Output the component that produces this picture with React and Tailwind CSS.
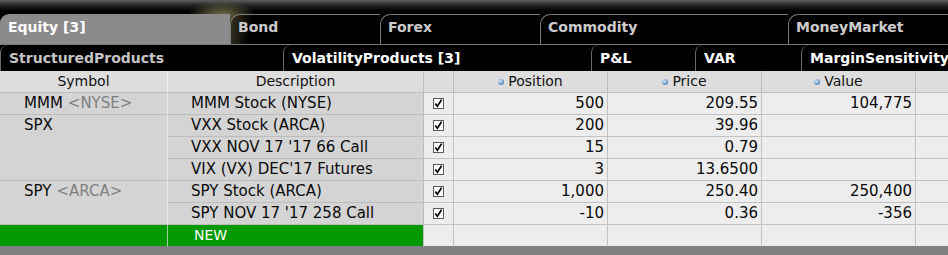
import { Fragment } from 'react';

const topTabs = [
  { label: 'Bond', w: 'w-[150px]' },
  { label: 'Forex', w: 'w-[160px]' },
  { label: 'Commodity', w: 'w-[248px]' },
  { label: 'MoneyMarket', w: 'flex-1' },
];

const subTabs = [
  { label: 'StructuredProducts', w: 'w-[283px]', dim: true },
  { label: 'VolatilityProducts [3]', w: 'w-[308px]' },
  { label: 'P&L', w: 'w-[104px]' },
  { label: 'VAR', w: 'w-[106px]' },
  { label: 'MarginSensitivity', w: 'flex-1' },
];

const groups = [
  {
    sym: 'MMM', ex: '<NYSE>', span: 'row-span-1',
    rows: [{ desc: 'MMM Stock (NYSE)', pos: '500', price: '209.55', value: '104,775' }],
  },
  {
    sym: 'SPX', span: 'row-span-3',
    rows: [
      { desc: 'VXX Stock (ARCA)', pos: '200', price: '39.96', value: '' },
      { desc: "VXX NOV 17 '17 66 Call", pos: '15', price: '0.79', value: '' },
      { desc: "VIX (VX) DEC'17 Futures", pos: '3', price: '13.6500', value: '' },
    ],
  },
  {
    sym: 'SPY', ex: '<ARCA>', span: 'row-span-2',
    rows: [
      { desc: 'SPY Stock (ARCA)', pos: '1,000', price: '250.40', value: '250,400' },
      { desc: "SPY NOV 17 '17 258 Call", pos: '-10', price: '0.36', value: '-356' },
    ],
  },
];

function Check() {
  return (
    <svg width="11" height="11" viewBox="0 0 11 11">
      <rect x="0.5" y="0.5" width="10" height="10" fill="#fff" stroke="#5a5a5a" />
      <path d="M2.3 5.6 L4.4 8.3 L8.6 1.6" stroke="#000" strokeWidth="1.7" fill="none" />
    </svg>
  );
}

function Dot() {
  return <span className="w-[6px] h-[6px] rounded-full bg-[radial-gradient(circle_at_35%_35%,#dcebf9,#4a7fbf_75%)]" />;
}

function TabBar() {
  return (
    <div>
      <div className="h-[44px] pt-[14px] flex bg-[radial-gradient(ellipse_34px_14px_at_222px_15px,#77724c,transparent),linear-gradient(to_bottom,#5e5e5e_0px,#262626_5px,#000_11px)]">
        <div className="w-[230px] h-[30px] bg-[#8b8b8b] rounded-tl-[9px] pl-[8px] pt-[4px] text-[14px] font-bold leading-[18px] text-white">
          Equity [3]
        </div>
        {topTabs.map((t) => (
          <div
            key={t.label}
            className={`${t.w} h-[30px] border-l border-t border-[#7c7c7c] rounded-tl-[10px] pl-[7px] pt-[3px] text-[14px] font-bold leading-[18px] text-[#cccccc] ${t.label === 'Bond' ? 'bg-[linear-gradient(100deg,#3a3522_0px,#000_22px)]' : 'bg-black'}`}
          >
            {t.label}
          </div>
        ))}
      </div>
      <div className="h-[27px] flex bg-black border-t border-[#777]">
        {subTabs.map((t) => (
          <div
            key={t.label}
            className={`${t.w} h-[26px] border-l border-[#6a6a6a] rounded-tl-[8px] pl-[8px] pt-[4px] text-[14px] font-bold leading-[18px] whitespace-nowrap overflow-hidden ${t.dim ? 'text-[#c4c4c4]' : 'text-white'}`}
          >
            {t.label}
          </div>
        ))}
      </div>
    </div>
  );
}

function Table() {
  const head = 'bg-[#dddddd] border-b border-r border-[#bdbdbd] flex items-center text-[14px] text-[#111]';
  const num = 'bg-[#ededed] border-b border-r border-[#c2c2c2] flex items-center justify-end pr-[3px] text-[15px] text-[#0a0a0a]';
  return (
    <div className="grid grid-cols-[168px_256px_30px_154px_154px_154px_1fr] auto-rows-[22px]">
      <div className={`${head} justify-center border-r-[#ececec]`}>Symbol</div>
      <div className={`${head} justify-center`}>Description</div>
      <div className={head} />
      <div className={`${head} justify-center gap-[4px]`}><Dot />Position</div>
      <div className={`${head} justify-center gap-[4px]`}><Dot />Price</div>
      <div className={`${head} justify-center gap-[4px]`}><Dot />Value</div>
      <div className={`${head} border-r-0`} />

      {groups.map((g) => (
        <Fragment key={g.sym}>
          <div className={`${g.span} col-start-1 bg-[#d4d4d4] border-b border-r border-b-[#bdbdbd] border-r-[#e8e8e8]`}>
            <div className="h-[21px] flex items-center pl-[24px] text-[15px] text-[#0a0a0a] whitespace-nowrap">
              {g.sym}
              {g.ex && <span className="ml-[5px] text-[#808080]">{g.ex}</span>}
            </div>
          </div>
          {g.rows.map((r) => (
            <Fragment key={r.desc}>
              <div className="col-start-2 bg-[#d4d4d4] border-b border-r border-[#bdbdbd] flex items-center pl-[23px] text-[15px] text-[#0a0a0a] whitespace-nowrap">
                {r.desc}
              </div>
              <div className="bg-[#ededed] border-b border-r border-[#c2c2c2] flex items-center pl-[9px]">
                <Check />
              </div>
              <div className={num}>{r.pos}</div>
              <div className={num}>{r.price}</div>
              <div className={num}>{r.value}</div>
              <div className="bg-[#ededed] border-b border-[#c2c2c2]" />
            </Fragment>
          ))}
        </Fragment>
      ))}

      <div className="bg-[#009a00] border-b border-r border-b-[#808080] border-r-[#9fcf9f]" />
      <div className="bg-[#009a00] border-b border-r border-b-[#808080] border-r-[#c2c2c2] flex items-center pl-[26px] text-[14px] text-white">
        NEW
      </div>
      <div className="bg-[#ededed] border-b border-r border-b-[#808080] border-r-[#c2c2c2]" />
      <div className="bg-[#ededed] border-b border-r border-b-[#808080] border-r-[#c2c2c2]" />
      <div className="bg-[#ededed] border-b border-r border-b-[#808080] border-r-[#c2c2c2]" />
      <div className="bg-[#ededed] border-b border-r border-b-[#808080] border-r-[#c2c2c2]" />
      <div className="bg-[#ededed] border-b border-[#808080]" />
    </div>
  );
}

export default function App() {
  return (
    <div className="w-[948px] h-[255px] overflow-hidden bg-[#808080] font-['DejaVu_Sans',Verdana,sans-serif]">
      <TabBar />
      <Table />
      <div className="h-[8px] bg-[#808080]" />
    </div>
  );
}
